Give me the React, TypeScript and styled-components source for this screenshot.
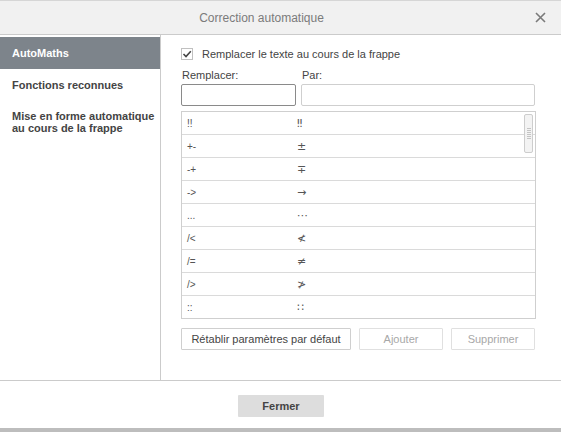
import React, { useState } from "react";
import styled, { createGlobalStyle } from "styled-components";

const GlobalStyle = createGlobalStyle`
  html, body {
    margin: 0;
    padding: 0;
    background: #ffffff;
  }
  body {
    font-family: "Liberation Sans", Arial, sans-serif;
    font-size: 11px;
    color: #444444;
  }
`;

const entries: [string, string][] = [
  ["!!", "‼"],
  ["+-", "±"],
  ["-+", "∓"],
  ["->", "→"],
  ["...", "⋯"],
  ["/<", "≮"],
  ["/=", "≠"],
  ["/>", "≯"],
  ["::", "∷"],
];

const menu = ["AutoMaths", "Fonctions reconnues", "Mise en forme automatique"];

const App = () => {
  const [active, setActive] = useState(0);
  const [checked, setChecked] = useState(true);

  return (
    <>
      <GlobalStyle />
      <Dialog>
        <Header>
          <Title>Correction automatique</Title>
          <CloseButton>
            <svg width="11" height="11" viewBox="0 0 11 11">
              <path d="M1 1 L10 10 M10 1 L1 10" stroke="#7a7a7a" strokeWidth="1.6" />
            </svg>
          </CloseButton>
        </Header>
        <Body>
          <Sidebar>
            {menu.map((m, i) => (
              <MenuItem key={m} active={i === active} onClick={() => setActive(i)}>
                {i === 2 ? (
                  <span>
                    Mise en forme automatique
                    <br />
                    au cours de la frappe
                  </span>
                ) : (
                  m
                )}
              </MenuItem>
            ))}
          </Sidebar>
          <Content>
            <CheckRow onClick={() => setChecked(!checked)}>
              <CheckBox>
                {checked && (
                  <svg width="10" height="10" viewBox="0 0 10 10">
                    <path d="M1.5 5 L4 7.5 L8.8 2.2" stroke="#444" strokeWidth="1.6" fill="none" />
                  </svg>
                )}
              </CheckBox>
              Remplacer le texte au cours de la frappe
            </CheckRow>
            <FieldRow>
              <Field width={115}>
                <FieldLabel>Remplacer:</FieldLabel>
                <TextInput focused autoFocus />
              </Field>
              <Field width={234}>
                <FieldLabel>Par:</FieldLabel>
                <TextInput />
              </Field>
            </FieldRow>
            <List>
              {entries.map(([a, b]) => (
                <ListRow key={a}>
                  <Cell>{a}</Cell>
                  <SymbolCell>{b}</SymbolCell>
                </ListRow>
              ))}
              <Thumb>
                <Grip />
              </Thumb>
            </List>
            <ButtonRow>
              <Button width={170}>Rétablir paramètres par défaut</Button>
              <Button width={84} disabled>
                Ajouter
              </Button>
              <Button width={84} disabled>
                Supprimer
              </Button>
            </ButtonRow>
          </Content>
        </Body>
        <Footer>
          <CloseFooterButton>Fermer</CloseFooterButton>
        </Footer>
      </Dialog>
    </>
  );
};

export default App;

const Dialog = styled.div`
  width: 561px;
  height: 432px;
  display: flex;
  flex-direction: column;
  box-sizing: border-box;
  border-top: 1px solid #d6d6d6;
  border-bottom: 4px solid #bdbdbd;
  background: #ffffff;
`;

const Header = styled.div`
  height: 33px;
  flex-shrink: 0;
  background: #f1f1f1;
  border-bottom: 1px solid #cbcbcb;
  display: flex;
  align-items: center;
  justify-content: center;
  padding-right: 38px;
  position: relative;
`;

const Title = styled.div`
  font-size: 12px;
  color: #7b7b7b;
  margin-top: 1px;
`;

const CloseButton = styled.div`
  position: absolute;
  right: 15px;
  top: 11px;
  width: 11px;
  height: 11px;
  display: flex;
  cursor: pointer;
`;

const Body = styled.div`
  flex: 1;
  display: flex;
  border-bottom: 1px solid #cbcbcb;
`;

const Sidebar = styled.div`
  width: 160px;
  flex-shrink: 0;
  border-right: 1px solid #cbcbcb;
  padding-top: 2px;
`;

const MenuItem = styled.div<{ active: boolean }>`
  min-height: 32px;
  padding: 9px 2px 9px 12px;
  box-sizing: border-box;
  display: flex;
  align-items: center;
  font-size: 11px;
  font-weight: bold;
  line-height: 12px;
  white-space: nowrap;
  color: ${(p) => (p.active ? "#ffffff" : "#444444")};
  background: ${(p) => (p.active ? "#7d848b" : "transparent")};
  cursor: pointer;
`;

const Content = styled.div`
  flex: 1;
  padding: 12px 25px 0 20px;
  display: flex;
  flex-direction: column;
`;

const CheckRow = styled.label`
  display: flex;
  align-items: center;
  gap: 9px;
  height: 14px;
  cursor: pointer;
`;

const CheckBox = styled.span`
  width: 12px;
  height: 12px;
  box-sizing: border-box;
  border: 1px solid #c0c0c0;
  display: flex;
  align-items: center;
  justify-content: center;
  background: #fff;
`;

const FieldRow = styled.div`
  display: flex;
  gap: 5px;
  margin-top: 8px;
`;

const Field = styled.div<{ width: number }>`
  width: ${(p) => p.width}px;
  display: flex;
  flex-direction: column;
`;

const FieldLabel = styled.div`
  height: 15px;
  line-height: 13px;
  padding-left: 1px;
`;

const TextInput = styled.input<{ focused?: boolean }>`
  height: 22px;
  box-sizing: border-box;
  border: 1px solid ${(p) => (p.focused ? "#8a8a8a" : "#cfcfcf")};
  border-radius: 2px;
  outline: none;
  padding: 0 4px;
  font-family: inherit;
  font-size: 11px;
  color: #444;
`;

const List = styled.div`
  margin-top: 5px;
  width: 355px;
  box-sizing: border-box;
  border: 1px solid #cfcfcf;
  position: relative;
`;

const ListRow = styled.div`
  height: 23px;
  box-sizing: border-box;
  border-bottom: 1px solid #dadada;
  display: flex;
  align-items: center;
  padding-left: 5px;
  &:nth-last-of-type(2) {
    height: 22px;
    border-bottom: none;
  }
`;

const Cell = styled.div`
  width: 110px;
  font-size: 10px;
  color: #555;
`;

const SymbolCell = styled.div`
  font-family: "DejaVu Sans", "Liberation Sans", sans-serif;
  font-size: 11px;
  color: #555;
`;

const Thumb = styled.div`
  position: absolute;
  right: 2px;
  top: 2px;
  width: 9px;
  height: 39px;
  box-sizing: border-box;
  border: 1px solid #cdcdcd;
  border-radius: 2px;
  background: #f3f3f3;
  display: flex;
  align-items: center;
  justify-content: center;
`;

const Grip = styled.div`
  width: 4px;
  height: 12px;
  background: repeating-linear-gradient(
    to bottom,
    #c4c4c4 0,
    #c4c4c4 1px,
    transparent 1px,
    transparent 2px
  );
`;

const ButtonRow = styled.div`
  display: flex;
  gap: 8px;
  margin-top: 9px;
`;

const Button = styled.button<{ width: number }>`
  width: ${(p) => p.width}px;
  height: 22px;
  box-sizing: border-box;
  border: 1px solid #cfcfcf;
  border-radius: 1px;
  background: #fff;
  font-family: inherit;
  font-size: 11px;
  line-height: 20px;
  white-space: nowrap;
  color: #444;
  padding: 0;
  cursor: pointer;
  &:disabled {
    color: #a8a8a8;
    border-color: #e0e0e0;
    cursor: default;
  }
`;

const Footer = styled.div`
  height: 47px;
  flex-shrink: 0;
  display: flex;
  justify-content: center;
  align-items: flex-start;
  padding-top: 14px;
  box-sizing: border-box;
`;

const CloseFooterButton = styled.button`
  width: 86px;
  height: 22px;
  border: none;
  border-radius: 1px;
  background: #dddddd;
  font-family: inherit;
  font-size: 11px;
  font-weight: bold;
  color: #444;
  cursor: pointer;
  margin-left: 1px;
`;
